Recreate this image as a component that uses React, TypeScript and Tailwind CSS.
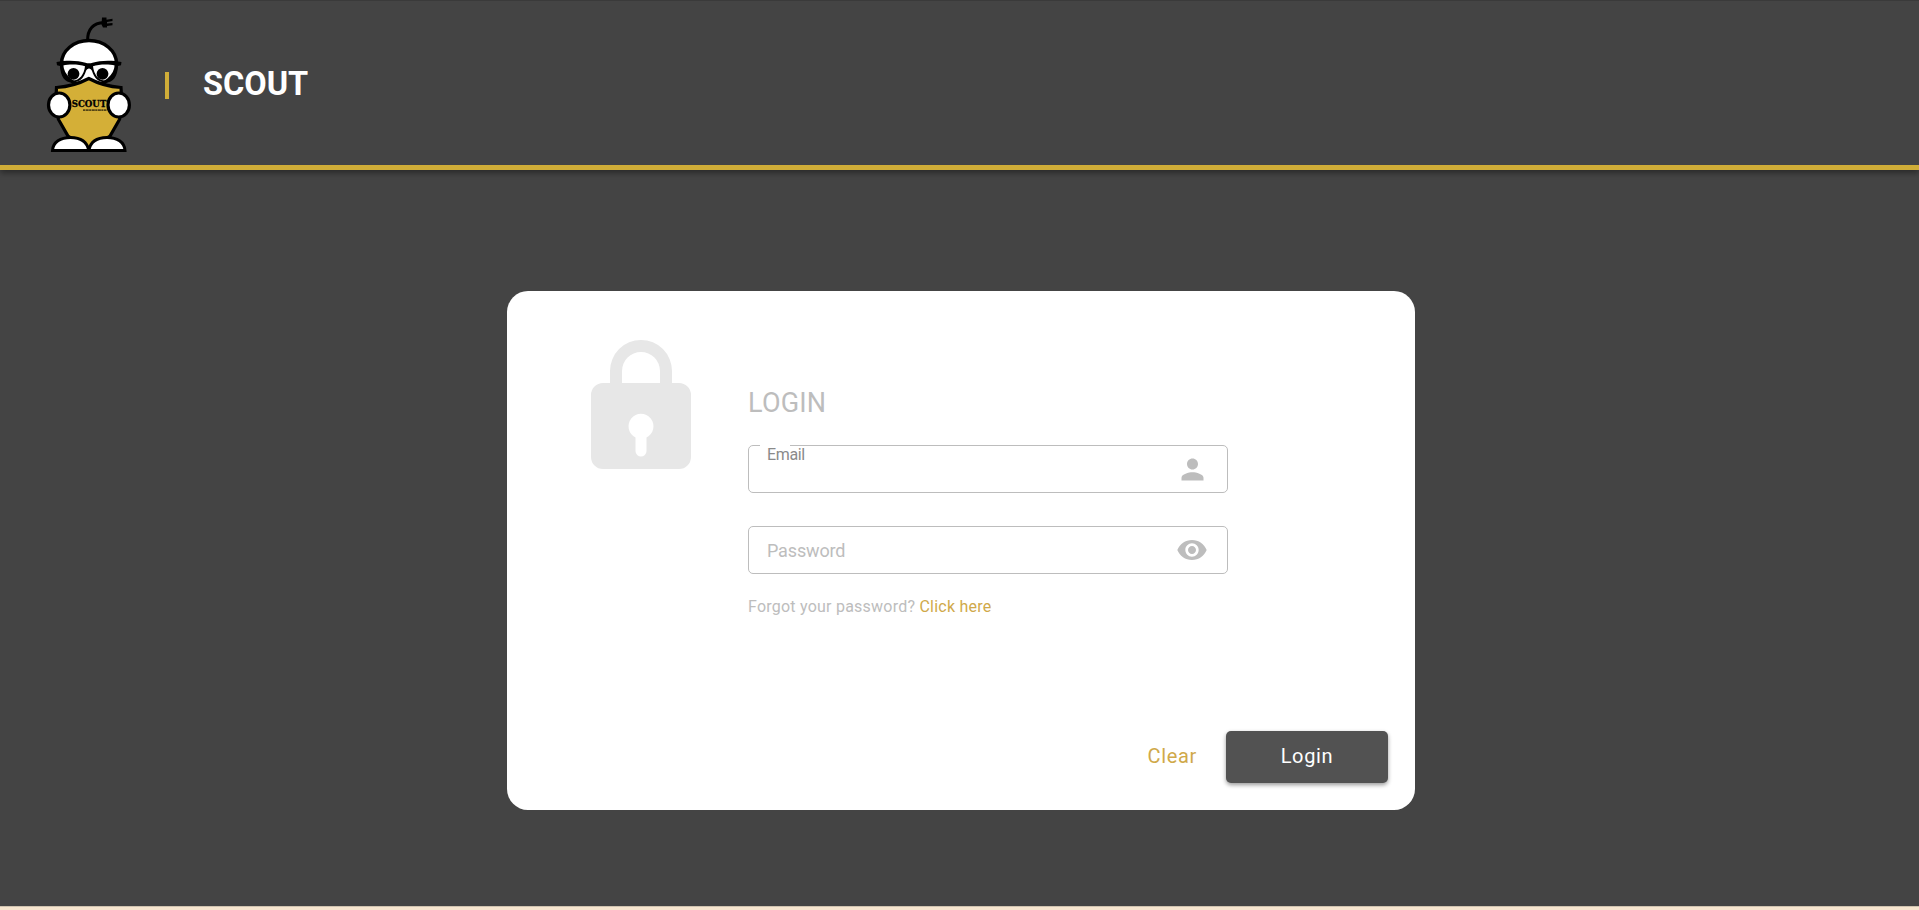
import React from "react";

function ScoutLogo() {
  return (
    <svg viewBox="0 0 90 140" className="h-[140px] w-[90px] shrink-0" role="img" aria-label="Scout mascot">
      <path d="M43.500 26C43.500 14 49 8 60 7.500" fill="none" stroke="#000" strokeWidth="3" />
      <path d="M58 2.500h4.500v2.200l6-.9v2.200l-5.500 1v1.500l5.500-.4v2.200l-5.500.7v1.500h-4l-1.500-3z" fill="#000" />
      <ellipse cx="45" cy="48.500" rx="27.500" ry="23" fill="#fff" stroke="#000" strokeWidth="3.400" />
      <circle cx="29.500" cy="58.800" r="5.900" />
      <circle cx="58.500" cy="58.800" r="5.900" />
      <path d="M12.500 47c9-2 22-1.800 29 .8 2 .7 5 .7 7 0 7-2.600 20-2.800 29-.8l-.5 3.200-3 .8c-.6 10.500-4.500 16.500-12.500 16.500-7.500 0-11.500-5-13.500-11.500-1-3.500-5-3.500-6 0C40 62.500 36 67.500 28.500 67.500 20.500 67.500 16.600 61.500 16 51l-3-.8zM19 50.500c.5 9.500 3.500 15 9.700 15 7 0 11.300-6 12.300-14.200-5.500-2-15.500-2.300-22-.8zM71 50.500c-6.500-1.500-16.500-1.200-22 .8C50 59.500 54.300 65.500 61.300 65.500 67.500 65.500 70.500 60 71 50.500z" fill="#000" fillRule="evenodd" />
      <path d="M12.500 72.500c12.500-.8 22-3.500 32.300-9 10.200 5.500 19.700 8.200 32.200 9 1 12 1.200 21.500-1.500 32L66 121l-21.200 13L24 121l-9.500-16.500C11.800 94 11.500 84.500 12.500 72.500z" fill="#d4af37" stroke="#000" strokeWidth="3.200" />
      <ellipse cx="15.200" cy="90" rx="10.700" ry="12" fill="#fff" stroke="#000" strokeWidth="3.200" />
      <ellipse cx="74.700" cy="90" rx="10.700" ry="12" fill="#fff" stroke="#000" strokeWidth="3.200" />
      <path d="M8.500 135.500c.5-8.500 8-13 18-13s16.500 4 18.300 13c1.700-9 8.200-13 18.200-13s17.500 4.500 18 13z" fill="#fff" stroke="#000" strokeWidth="3" />
      <text x="27.800" y="92.200" textLength="34.500" lengthAdjust="spacingAndGlyphs" fontFamily="DejaVu Serif, serif" fontWeight="700" fontSize="9.500" stroke="#000" strokeWidth=".3">SCOUT</text>
      <path d="M39 95.200h23.500" stroke="#000" strokeWidth="1.800" strokeDasharray="2.200 .5 3 .4" opacity=".6" />
    </svg>
  );
}

function LockIcon() {
  return (
    <svg viewBox="0 0 100 129" className="h-[129px] w-[100px]" fill="#e7e7e7">
      <path fillRule="evenodd" d="M19 43V31a31 31 0 0 1 62 0v12h7a12 12 0 0 1 12 12v62a12 12 0 0 1-12 12H12a12 12 0 0 1-12-12V55a12 12 0 0 1 12-12zM31 43h38V31a19 19 0 0 0-38 0zM44.500 97.500V111a5.500 5.500 0 0 0 11 0V97.500a12.500 12.500 0 1 0-11 0z" />
    </svg>
  );
}

function PersonIcon() {
  return (
    <svg viewBox="0 0 24 24" className="size-[33px]" fill="#bdbdbd">
      <path d="M12 12c2.210 0 4-1.790 4-4s-1.790-4-4-4-4 1.790-4 4 1.790 4 4 4zm0 2c-2.670 0-8 1.340-8 4v2h16v-2c0-2.660-5.330-4-8-4z" />
    </svg>
  );
}

function EyeIcon() {
  return (
    <svg viewBox="0 0 24 24" className="size-[32px]" fill="#bdbdbd">
      <path d="M12 4.500C7 4.500 2.730 7.610 1 12c1.730 4.390 6 7.500 11 7.500s9.270-3.110 11-7.500c-1.730-4.390-6-7.500-11-7.500zM12 17c-2.760 0-5-2.240-5-5s2.240-5 5-5 5 2.240 5 5-2.240 5-5 5zm0-8c-1.660 0-3 1.340-3 3s1.340 3 3 3 3-1.340 3-3-1.340-3-3-3z" />
    </svg>
  );
}

export default function App() {
  return (
    <div className="flex h-[910px] flex-col bg-[#444444] font-['Roboto',sans-serif]">
      <header className="z-10 flex h-[170px] shrink-0 items-start border-t border-b-5 border-t-[#3a3a3a] border-b-[#d0ad38] pt-[14px] pl-[44px] shadow-[0_3px_6px_rgba(0,0,0,0.4)]">
        <ScoutLogo />
        <div className="mt-[57px] ml-[31px] h-[27px] w-1 bg-[#d0ad38]" />
        <h1 className="mt-[51px] ml-[34px] text-[32.5px] leading-[37px] font-bold text-white">SCOUT</h1>
      </header>

      <main className="flex flex-1 justify-center pt-[121px]">
        <section className="ml-[3px] flex h-[519px] w-[908px] flex-col rounded-[21px] bg-white">
          <div className="flex flex-1">
            <div className="w-[241px] pt-[49px] pl-[84px]">
              <LockIcon />
            </div>
            <form className="w-[480px] pt-[95px]">
              <h2 className="h-[59px] text-[27px] leading-[35px] tracking-[0.2px] text-[#bdbdbd]">LOGIN</h2>
              <div className="relative flex h-12 items-center justify-end rounded-[5px] border border-[#bdbdbd] pr-[18px]">
                <span className="absolute -top-px left-[11px] h-px w-[30px] bg-white" />
                <label className="absolute -top-px left-[18px] text-base leading-[19px] tracking-[-0.35px] text-[#8a8a8a]">Email</label>
                <PersonIcon />
              </div>
              <div className="mt-[33px] flex h-12 items-center justify-between rounded-[5px] border border-[#bdbdbd] pr-[19px] pl-[18px]">
                <label className="pt-0.5 text-lg tracking-[-0.15px] text-[#bdbdbd]">Password</label>
                <EyeIcon />
              </div>
              <p className="mt-[21px] text-base leading-6 tracking-[0.23px] text-[#bdbdbd]">
                Forgot your password? <a className="text-[#d0a94a]">Click here</a>
              </p>
            </form>
          </div>
          <div className="flex h-[79px] items-start justify-end pr-[27px]">
            <button className="mr-[29px] h-[52px] pb-0.5 text-xl tracking-[0.65px] text-[#d0a94a]">Clear</button>
            <button className="h-[52px] w-[162px] rounded-[5px] bg-[#525252] pb-0.5 text-xl tracking-[0.65px] text-white shadow-[0_2px_4px_rgba(0,0,0,0.4)]">Login</button>
          </div>
        </section>
      </main>
      <div className="h-1 shrink-0 border-t border-[#cfc3b0] bg-[#f7e6cf]" />
    </div>
  );
}
